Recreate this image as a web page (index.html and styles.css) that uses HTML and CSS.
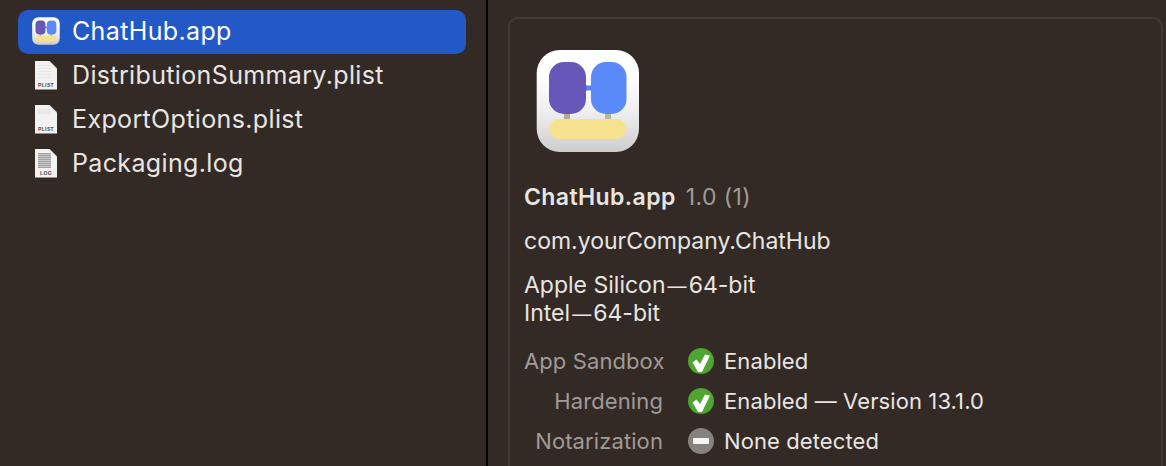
FILE: index.html
```html
<!DOCTYPE html>
<html lang="en">
<head>
  <meta charset="UTF-8">
  <meta name="viewport" content="width=device-width, initial-scale=1.0">
  <title>ChatHub.app</title>
  <link rel="stylesheet" href="styles.css">
</head>
<body>
  <svg class="defs" width="0" height="0" aria-hidden="true">
    <defs>
      <linearGradient id="tile" x1="0" y1="0" x2="0" y2="1">
        <stop offset="0.25" stop-color="#ffffff"/>
        <stop offset="0.6" stop-color="#efefef"/>
        <stop offset="1" stop-color="#cdcdcd"/>
      </linearGradient>
      <symbol id="app-icon" viewBox="0 0 104 104">
        <rect x="0.7" y="1" width="102.3" height="102" rx="23" fill="url(#tile)"/>
        <rect x="28" y="62" width="6" height="10" fill="#b5a98f"/>
        <rect x="69" y="62" width="6" height="10" fill="#b5b79e"/>
        <path d="M48 35 Q53 38.500 58 35 L58 43 Q53 39.500 48 43 Z" fill="#5a80ee"/>
        <rect x="13" y="13" width="37" height="52" rx="15" fill="#6757b8"/>
        <rect x="55" y="13" width="35.500" height="52" rx="15" fill="#5a8af7"/>
        <rect x="13" y="70" width="77.500" height="20" rx="10" fill="#f7e290"/>
      </symbol>
      <symbol id="check-icon" viewBox="0 0 26 26">
        <circle cx="13" cy="13" r="13" fill="#4ea52f"/>
        <path d="M4.500 14.500 L8.500 11.500 L12 16 L17 6.500 L22 7.500 L14 24 L10 24 Z" fill="#fff"/>
      </symbol>
      <symbol id="none-icon" viewBox="0 0 26 26">
        <circle cx="13" cy="13" r="13" fill="#85827f"/>
        <rect x="5" y="10" width="16" height="6" rx="1" fill="#f5f5f5"/>
      </symbol>
    </defs>
  </svg>

  <div class="window">
    <ul class="file-list">
      <li class="file-row selected">
        <svg class="app-small"><use href="#app-icon"/></svg>
        <span>ChatHub.app</span>
      </li>
      <li class="file-row">
        <div class="doc"><i class="scribble faint"></i><b>PLIST</b></div>
        <span>DistributionSummary.plist</span>
      </li>
      <li class="file-row">
        <div class="doc"><i class="scribble fainter"></i><b>PLIST</b></div>
        <span>ExportOptions.plist</span>
      </li>
      <li class="file-row">
        <div class="doc"><i class="scribble dark"></i><b>LOG</b></div>
        <span>Packaging.log</span>
      </li>
    </ul>

    <div class="divider"></div>

    <main class="detail">
      <section class="card">
        <svg class="app-large"><use href="#app-icon"/></svg>
        <h1 class="app-name">ChatHub.app <span class="version">1.0 (1)</span></h1>
        <p class="bundle-id">com.yourCompany.ChatHub</p>
        <p class="archs">Apple Silicon&#8202;<span class="dash">—</span>&#8202;64-bit<br>Intel&#8202;<span class="dash">—</span>&#8202;64-bit</p>
        <dl class="facts">
          <dt>App Sandbox</dt>
          <dd><svg class="status"><use href="#check-icon"/></svg>Enabled</dd>
          <dt>Hardening</dt>
          <dd><svg class="status"><use href="#check-icon"/></svg>Enabled — Version 13.1.0</dd>
          <dt>Notarization</dt>
          <dd><svg class="status"><use href="#none-icon"/></svg>None detected</dd>
        </dl>
      </section>
    </main>
  </div>
</body>
</html>
```

FILE: styles.css
```css
* {
  margin: 0;
  padding: 0;
  box-sizing: border-box;
}

html,
body {
  height: 466px;
  overflow: hidden;
}

body {
  font-family: Inter, "Liberation Sans", sans-serif;
  background-color: #332a26;
  color: #e8e5e3;
}

.defs {
  display: block;
  height: 0;
}

.window {
  display: flex;
  height: 466px;
  overflow: hidden;
}

/* left list */
.file-list {
  width: 486px;
  flex: none;
  list-style: none;
  padding: 10px 20px 0 18px;
}

.file-row {
  display: flex;
  align-items: center;
  gap: 12px;
  height: 44px;
  padding: 0 0 2px 14px;
  font-size: 25px;
  letter-spacing: 0.36px;
  border-radius: 10px;
}

.file-row.selected {
  background-color: #2359c7;
  color: #ffffff;
}

.app-small {
  width: 28px;
  height: 28px;
  flex: none;
}

.doc {
  width: 22px;
  height: 29px;
  margin: 0 3px;
  flex: none;
  display: flex;
  flex-direction: column;
  align-items: center;
  justify-content: flex-end;
  background: linear-gradient(225deg, #c4c4c4 0, #d6d6d6 6px, transparent 6px),
    #f2f2f2;
  clip-path: polygon(0 0, 14px 0, 100% 8px, 100% 100%, 0 100%);
  color: #4a4a4a;
}

.doc b {
  font-size: 5px;
  line-height: 9px;
  font-weight: 700;
  font-family: "Liberation Sans", sans-serif;
  letter-spacing: 0.4px;
}

.scribble {
  width: 13px;
  height: 15px;
  margin: 0 3px 1px 0;
}

.scribble.faint {
  background: repeating-linear-gradient(#e6e6e6 0 1px, #f2f2f2 1px 3px);
}

.scribble.fainter {
  background: linear-gradient(#e8e8e8 0 5px, #f2f2f2 5px);
}

.scribble.dark {
  background: repeating-linear-gradient(#a3a3a3 0 1px, #c6c6c6 1px 2px);
}

.divider {
  width: 2px;
  flex: none;
  background-color: #000000;
}

/* right side */
.detail {
  flex: 1;
  padding: 17px 3px 0 20px;
}

.card {
  height: 500px;
  padding: 30px 15px 0 14px;
  border: 2px solid #433a36;
  border-radius: 10px;
}

.app-large {
  display: block;
  width: 104px;
  height: 104px;
  margin-left: 12px;
}

.app-name {
  margin-top: 30px;
  font-size: 23px;
  line-height: 28px;
  font-weight: 600;
  letter-spacing: 0.4px;
}

.version {
  margin-left: 4px;
  font-weight: 400;
  color: #a09b97;
}

.bundle-id {
  margin-top: 16px;
  font-size: 23px;
  line-height: 28px;
}

.archs {
  margin-top: 16px;
  font-size: 23px;
  line-height: 28px;
}

.dash {
  font-size: 19px;
  line-height: 1;
}

.facts {
  margin-top: 20px;
  display: grid;
  grid-template-columns: 139px 1fr;
  column-gap: 25px;
  row-gap: 12px;
  font-size: 22px;
  line-height: 28px;
  letter-spacing: 0.1px;
}

.facts dt {
  text-align: right;
  white-space: nowrap;
  color: #a09b97;
}

.facts dd {
  display: flex;
  align-items: center;
  gap: 10px;
}

.status {
  width: 26px;
  height: 26px;
  flex: none;
}
```
